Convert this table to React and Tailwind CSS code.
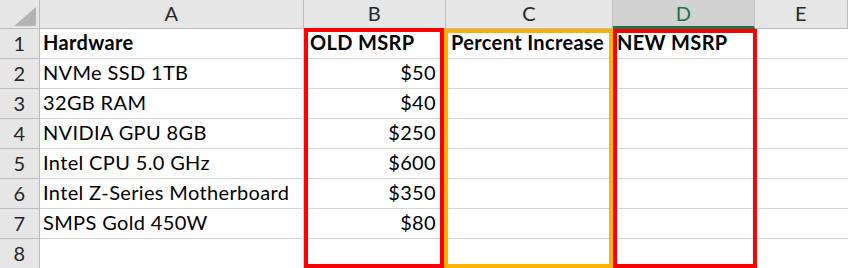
const rows = [
  ["Hardware", "OLD MSRP", "Percent Increase", "NEW MSRP", true],
  ["NVMe SSD 1TB", "$50", "", ""],
  ["32GB RAM", "$40", "", ""],
  ["NVIDIA GPU 8GB", "$250", "", ""],
  ["Intel CPU 5.0 GHz", "$600", "", ""],
  ["Intel Z-Series Motherboard", "$350", "", ""],
  ["SMPS Gold 450W", "$80", "", ""],
  ["", "", "", ""],
];

const cols = ["A", "B", "C", "D", "E"];
const gridCols = "grid grid-cols-[40px_264px_142px_167px_142px_1fr]";

function Corner() {
  return (
    <div className="relative h-[29px] border-r border-b border-[#bdbdbd] bg-[#e6e6e6]">
      <svg className="absolute left-[14px] top-[7px]" width="22" height="19" viewBox="0 0 22 19">
        <polygon points="22,0 22,19 0,19" fill="#b4b4b4" />
      </svg>
    </div>
  );
}

export default function App() {
  return (
    <div
      className="relative h-[268px] w-[848px] overflow-hidden bg-white text-black tracking-[0.35px]"
      style={{ fontFamily: "Lato, 'Open Sans', sans-serif" }}
    >
      <div className={gridCols}>
        <Corner />
        {cols.map((c) =>
          c === "D" ? (
            <div
              key={c}
              className="flex h-[29px] items-end justify-center border-r border-b-[3px] border-r-[#bdbdbd] border-b-[#217346] bg-[#d2d2d2] pb-[1px] text-[20px] leading-[24px] text-[#217346]"
            >
              {c}
            </div>
          ) : (
            <div
              key={c}
              className="flex h-[29px] items-end justify-center border-r border-b border-[#bdbdbd] bg-[#e6e6e6] pb-[3px] text-[20px] leading-[24px] text-[#262626]"
            >
              {c}
            </div>
          )
        )}

        {rows.map((r, i) => (
          <div key={i} className="contents">
            <div className="flex h-[30px] items-end justify-center border-r border-b border-[#bdbdbd] bg-[#e6e6e6] pb-[3px] text-[20px] leading-[24px] text-[#262626]">
              {i + 1}
            </div>
            <div className={`flex h-[30px] items-end border-r border-b border-[#d4d4d4] pb-[4px] pl-[3px] text-[20px] leading-[24px] ${r[4] ? "font-bold" : ""}`}>
              {r[0]}
            </div>
            <div className={`flex h-[30px] items-end border-r border-b border-[#d4d4d4] pb-[4px] text-[20px] leading-[24px] ${r[4] ? "justify-start pl-[6px] font-bold" : "justify-end pr-[9px]"}`}>
              {r[1]}
            </div>
            <div className={`flex h-[30px] items-end border-r border-b border-[#d4d4d4] pb-[4px] pl-[5px] text-[20px] leading-[24px] ${r[4] ? "font-bold" : ""}`}>
              {r[2]}
            </div>
            <div className={`flex h-[30px] items-end border-r border-b border-[#d4d4d4] pb-[4px] pl-[4px] text-[20px] leading-[24px] ${r[4] ? "font-bold" : ""}`}>
              {r[3]}
            </div>
            <div className="h-[30px] border-b border-[#d4d4d4]" />
          </div>
        ))}
      </div>

      {/* outlined column ranges */}
      <div className="absolute left-[304px] top-[28px] h-[240px] w-[140px] border-4 border-[#ff0000]" />
      <div className="absolute left-[444px] top-[29px] h-[239px] w-[169px] border-4 border-[#ffb000]" />
      <div className="absolute left-[613px] top-[29px] h-[239px] w-[144px] border-4 border-[#ff0000]" />
    </div>
  );
}
